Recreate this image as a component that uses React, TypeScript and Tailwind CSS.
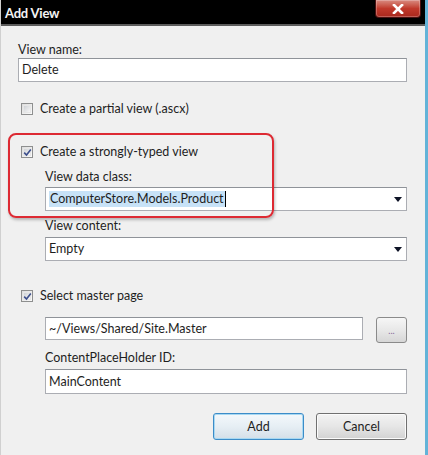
import React from "react"

const font = { fontFamily: 'Lato, "Open Sans", sans-serif' }

function CheckBox({ checked }: { checked?: boolean }) {
  return (
    <div className="relative h-[12px] w-[12px] shrink-0 border border-[#8e8f8f] bg-gradient-to-br from-[#dcdcdc] to-[#fbfbfb]">
      <div className="absolute inset-[1px] border border-[#e6e6e6] bg-gradient-to-br from-[#cfd2d6] to-[#f6f6f6]" />
      {checked && (
        <svg className="absolute left-[1px] top-[1px]" width="9" height="9" viewBox="0 0 9 9">
          <path d="M1.2 4.6 L3.5 7 L7.8 1.4" fill="none" stroke="#3d4f8c" strokeWidth="1.6" />
        </svg>
      )}
    </div>
  )
}

function Arrow() {
  return (
    <svg width="8" height="5" viewBox="0 0 8 5" className="shrink-0">
      <path d="M0 0 H8 L4 5 Z" fill="#0e1326" />
    </svg>
  )
}

const boxCls =
  "flex items-center border border-[#abadb3] border-t-[#8f9399] bg-white pl-[3px] text-[12.5px] text-[#1e1e1e]"

export default function App() {
  return (
    <div
      className="relative h-[455px] w-[428px] overflow-hidden border-r-[3px] border-l border-r-[#63b3d8] border-l-[#d0d0d0] bg-[#f0f0f0]"
      style={font}
    >
      {/* title bar */}
      <div className="flex h-[26px] items-start justify-between border-b-2 border-[#5c5c5c] bg-black">
        <div className="pl-[4px] pt-[4px] text-[13px] font-bold leading-[18px] tracking-[-0.2px] text-[#f4f4f4]">
          Add View
        </div>
        <div className="mr-[4px] flex h-[18px] w-[46px] items-center justify-center rounded-b-[4px] border border-t-0 border-[#4a1010] bg-gradient-to-b from-[#d88a80] via-[#c0392b] to-[#a8281e] shadow-[inset_0_0_0_1px_rgba(255,255,255,0.25)]">
          <svg width="12" height="10" viewBox="0 0 12 10">
            <path d="M2 1 L10 9 M10 1 L2 9" stroke="#ffffff" strokeWidth="2.6" strokeLinecap="square" />
          </svg>
        </div>
      </div>

      <div className="flex flex-col pl-[17px] pr-[18px] text-[12.5px] leading-[16px] text-[#1e1e1e]">
        <div className="mt-[16px]">View name:</div>
        <div className={`${boxCls} h-[24px]`}>Delete</div>

        <div className="mt-[19px] flex items-center gap-[7px] pl-[3px]">
          <CheckBox />
          <span>Create a partial view (.ascx)</span>
        </div>

        <div className="mt-[27px] flex items-center gap-[7px] pl-[3px]">
          <CheckBox checked />
          <span>Create a strongly-typed view</span>
        </div>

        <div className="flex flex-col pl-[27px]">
          <div className="mt-[9px]">View data class:</div>
          <div className={`${boxCls} mt-[2px] h-[24px] justify-between pr-[4px] pl-[2px]`}>
            <span className="flex items-center">
              <span className="bg-[#c7e2f7] px-[1px]">ComputerStore.Models.Product</span>
              <span className="h-[16px] w-px bg-black" />
            </span>
            <Arrow />
          </div>

          <div className="mt-[7px]">View content:</div>
          <div className={`${boxCls} mt-[3px] h-[24px] justify-between pr-[4px]`}>
            <span>Empty</span>
            <Arrow />
          </div>
        </div>

        <div className="mt-[27px] flex items-center gap-[7px] pl-[3px]">
          <CheckBox checked />
          <span>Select master page</span>
        </div>

        <div className="flex flex-col pl-[27px]">
          <div className="mt-[13px] flex items-start gap-[13px]">
            <div className={`${boxCls} h-[23px] flex-1`}>~/Views/Shared/Site.Master</div>
            <div className="flex h-[26px] w-[31px] items-center justify-center rounded-[3px] border border-[#8a8a8a] bg-gradient-to-b from-[#f6f6f6] via-[#e8e8e8] to-[#d6d6d6] text-[9px] leading-none text-[#8a6a9a]">
              ...
            </div>
          </div>
          <div className="mt-[7px]">ContentPlaceHolder ID:</div>
          <div className={`${boxCls} mt-[3px] h-[25px]`}>MainContent</div>
        </div>

        <div className="mt-[19px] flex justify-end gap-[12px]">
          <div className="flex h-[27px] w-[91px] items-center justify-center rounded-[3px] border border-[#3c8cc8] bg-gradient-to-b from-[#f4f8fb] via-[#e6eef4] to-[#d4dfe8] shadow-[inset_0_0_0_1px_#a8d8f2]">
            Add
          </div>
          <div className="flex h-[27px] w-[91px] items-center justify-center rounded-[3px] border border-[#707070] bg-gradient-to-b from-[#f3f3f3] via-[#e6e6e6] to-[#d2d2d2] shadow-[inset_0_0_0_1px_#fbfbfb]">
            Cancel
          </div>
        </div>
      </div>

      {/* red annotation highlight */}
      <div className="pointer-events-none absolute left-[7px] top-[133px] h-[85px] w-[266px] rounded-[8px] border-2 border-[#dd2a33] shadow-[1px_2px_3px_rgba(0,0,0,0.25)]" />
    </div>
  )
}
